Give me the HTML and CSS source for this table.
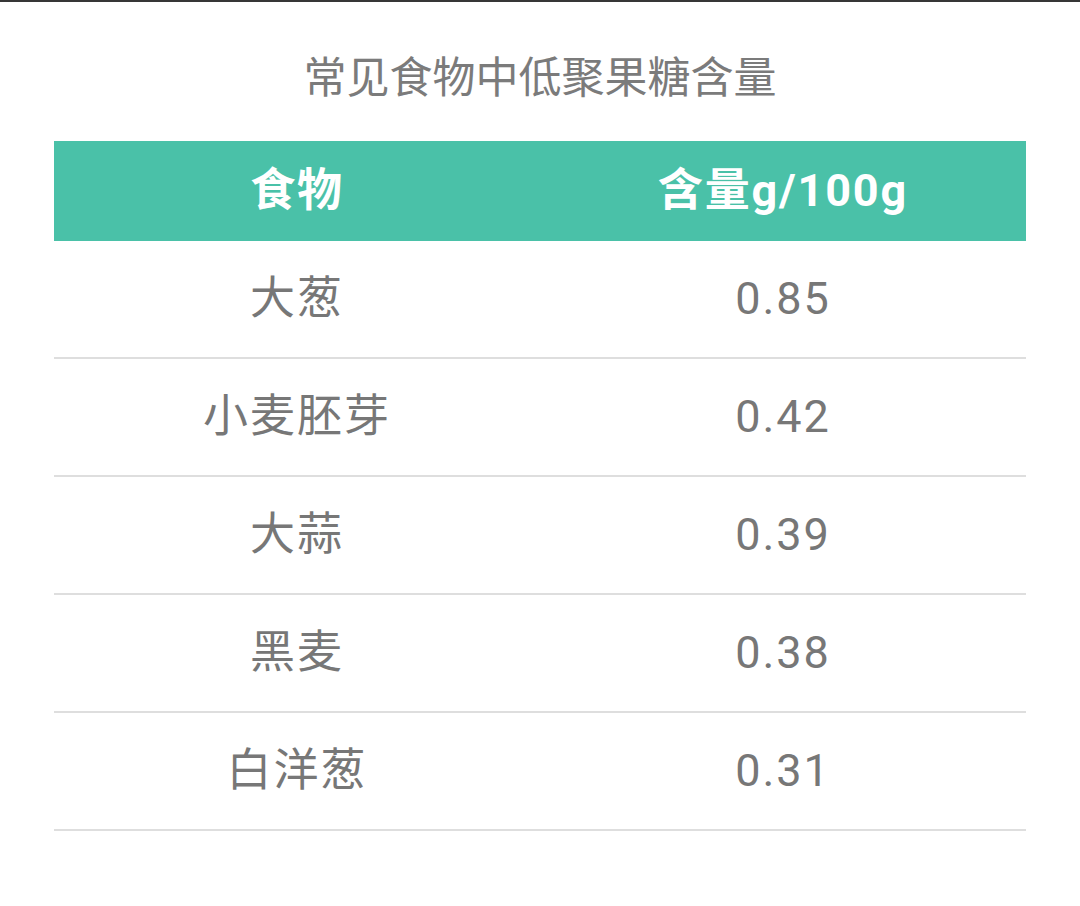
FILE: index.html
```html
<!DOCTYPE html>
<html lang="zh">
<head>
<meta charset="utf-8">
<link rel="stylesheet" href="styles.css">
</head>
<body>
<div class="page">
  <h1 class="title">常见食物中低聚果糖含量</h1>
  <div class="table">
    <div class="row head"><div class="cell">食物</div><div class="cell">含量g/100g</div></div>
    <div class="row"><div class="cell">大葱</div><div class="cell">0.85</div></div>
    <div class="row"><div class="cell">小麦胚芽</div><div class="cell">0.42</div></div>
    <div class="row"><div class="cell">大蒜</div><div class="cell">0.39</div></div>
    <div class="row"><div class="cell">黑麦</div><div class="cell">0.38</div></div>
    <div class="row"><div class="cell">白洋葱</div><div class="cell">0.31</div></div>
  </div>
</div>
</body>
</html>
```
FILE: styles.css
```css
html, body {
  margin: 0;
  padding: 0;
  background: #fff;
}
body {
  font-family: Roboto, "Noto Sans CJK SC", sans-serif;
  width: 1080px;
  height: 906px;
  overflow: hidden;
}
.page {
  border-top: 2px solid #363636;
  padding: 0 54px;
}
.title {
  margin: 48px 0 35px;
  font-size: 43px;
  line-height: 56px;
  font-weight: 400;
  color: #7b7b7b;
  text-align: center;
}
.table {
  display: flex;
  flex-direction: column;
}
.row {
  display: grid;
  grid-template-columns: 1fr 1fr;
  height: 116px;
  border-bottom: 2px solid #dedede;
  align-items: center;
  color: #777;
  font-size: 45px;
  letter-spacing: 2px;
}
.row.head {
  height: 100px;
  border-bottom: none;
  background: #4ac1a8;
  color: #fff;
  font-weight: 700;
  letter-spacing: 1.8px;
}
.cell {
  text-align: center;
  line-height: 56px;
}
```
